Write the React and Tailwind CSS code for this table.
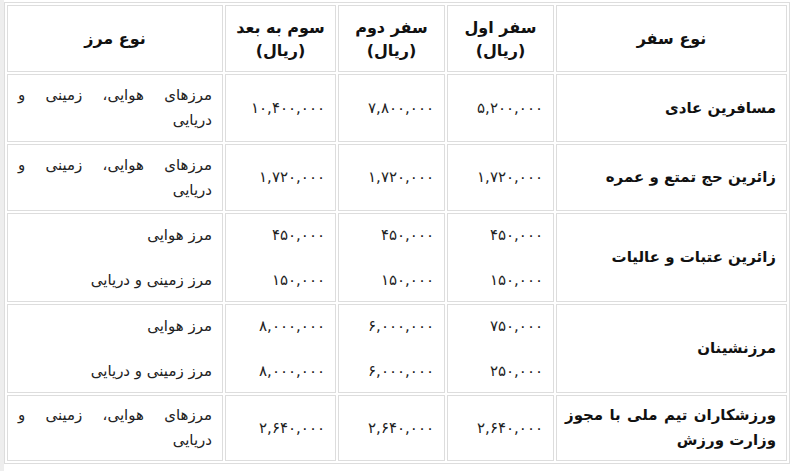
import React from "react";

const rows = [
  {
    type: ["مسافرین عادی"],
    h: "h-[68px]",
    first: ["۵,۲۰۰,۰۰۰"],
    second: ["۷,۸۰۰,۰۰۰"],
    third: ["۱۰,۴۰۰,۰۰۰"],
    border: "all",
  },
  {
    type: ["زائرین حج تمتع و عمره"],
    h: "h-[67px]",
    first: ["۱,۷۲۰,۰۰۰"],
    second: ["۱,۷۲۰,۰۰۰"],
    third: ["۱,۷۲۰,۰۰۰"],
    border: "all",
  },
  {
    type: ["زائرین عتبات و عالیات"],
    h: "h-[89px]",
    first: ["۴۵۰,۰۰۰", "۱۵۰,۰۰۰"],
    second: ["۴۵۰,۰۰۰", "۱۵۰,۰۰۰"],
    third: ["۴۵۰,۰۰۰", "۱۵۰,۰۰۰"],
    border: "split",
  },
  {
    type: ["مرزنشینان"],
    h: "h-[89px]",
    first: ["۷۵۰,۰۰۰", "۲۵۰,۰۰۰"],
    second: ["۶,۰۰۰,۰۰۰", "۶,۰۰۰,۰۰۰"],
    third: ["۸,۰۰۰,۰۰۰", "۸,۰۰۰,۰۰۰"],
    border: "split",
  },
  {
    type: ["ورزشکاران تیم ملی با مجوز", "وزارت ورزش"],
    h: "h-[66px]",
    first: ["۲,۶۴۰,۰۰۰"],
    second: ["۲,۶۴۰,۰۰۰"],
    third: ["۲,۶۴۰,۰۰۰"],
    border: "all",
  },
];

function Lines({ items, num }) {
  const cls = num ? "text-[15px] tracking-[0.6px]" : "";
  if (items.length === 1) return <div className={cls}>{items[0]}</div>;
  return (
    <div className="flex flex-col gap-[20px]">
      {items.map((t, i) => (
        <div key={i} className={cls}>
          {t}
        </div>
      ))}
    </div>
  );
}

function Justified({ lines }) {
  // first line stretched edge to edge, last one right aligned
  return (
    <div>
      {lines.map((t, i) => (
        <div
          key={i}
          className={
            i < lines.length - 1
              ? "whitespace-nowrap text-justify [text-align-last:justify]"
              : "text-right"
          }
        >
          {t}
        </div>
      ))}
    </div>
  );
}

export default function App() {
  const cell = "border border-[#dddddd] align-middle";

  return (
    <div className="flex min-h-[471px] bg-white font-['DejaVu_Sans',sans-serif] text-[15px] leading-[25px] text-[#222]">
      <div className="w-[4px] shrink-0 bg-[#eeeeee]" />
      <div className="pt-[2px]">
        <table
          dir="rtl"
          className="table-fixed w-[786px] border border-[#dddddd] border-separate border-spacing-[2px]"
        >
          <colgroup>
            <col className="w-[231px]" />
            <col className="w-[107px]" />
            <col className="w-[107px]" />
            <col className="w-[111px]" />
            <col className="w-[216px]" />
          </colgroup>
          <thead>
            <tr className="h-[67px] text-[16px] font-bold text-[#111] leading-[23px]">
              <th className={`${cell} text-center`}>نوع سفر</th>
              <th className={`${cell} text-center`}>
                سفر اول
                <br />
                (ریال)
              </th>
              <th className={`${cell} text-center`}>
                سفر دوم
                <br />
                (ریال)
              </th>
              <th className={`${cell} text-center`}>
                سوم به بعد
                <br />
                (ریال)
              </th>
              <th className={`${cell} text-center`}>نوع مرز</th>
            </tr>
          </thead>
          <tbody>
            {rows.map((r, i) => (
              <tr key={i} className={r.h}>
                <td className={`${cell} pr-[10px] pl-[8px] font-bold text-[#111]`}>
                  <Justified lines={r.type} />
                </td>
                <td className={`${cell} px-[10px] text-right`}>
                  <Lines items={r.first} num />
                </td>
                <td className={`${cell} px-[10px] text-right`}>
                  <Lines items={r.second} num />
                </td>
                <td className={`${cell} px-[10px] text-right`}>
                  <Lines items={r.third} num />
                </td>
                <td className={`${cell} px-[10px]`}>
                  {r.border === "all" ? (
                    <Justified lines={["مرزهای هوایی، زمینی و", "دریایی"]} />
                  ) : (
                    <Lines items={["مرز هوایی", "مرز زمینی و دریایی"]} />
                  )}
                </td>
              </tr>
            ))}
          </tbody>
        </table>
      </div>
    </div>
  );
}
